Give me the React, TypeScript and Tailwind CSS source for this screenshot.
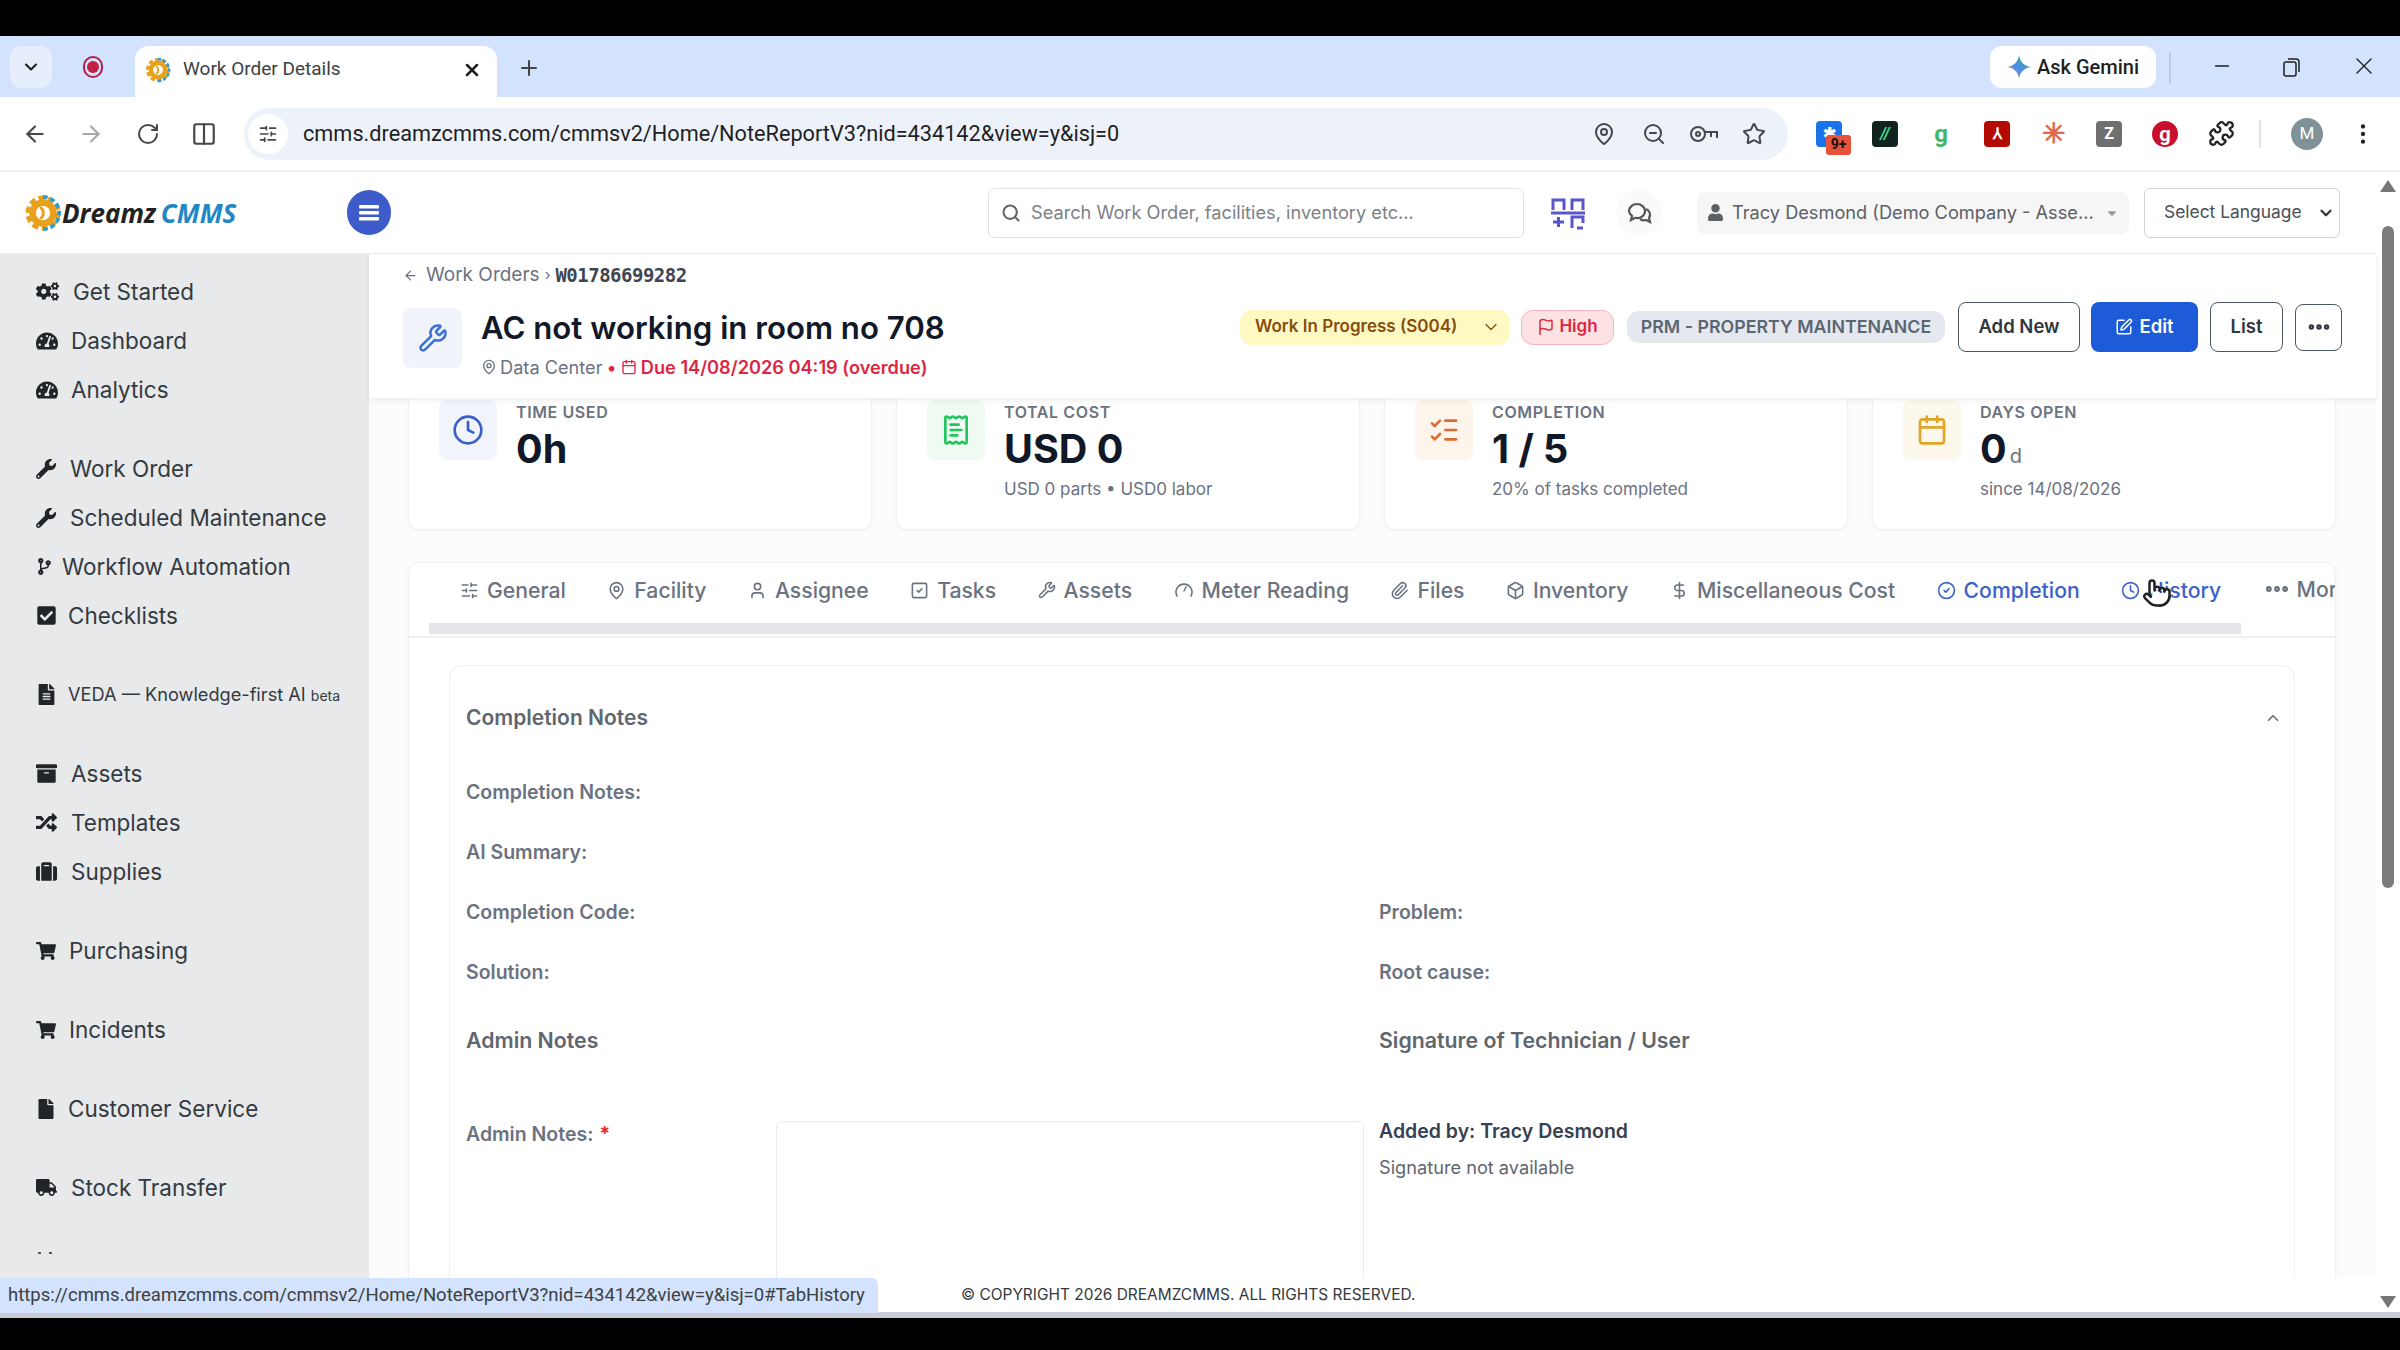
import React from "react";
import {
  ChevronDown, ChevronUp, X, Plus, ArrowLeft, ArrowRight, RotateCw, Columns2, MapPin, ZoomOut, Star,
  Puzzle, EllipsisVertical, Minus, Search, Wrench, Calendar, Clock, ReceiptText, ListChecks, Flag,
  SquarePen, Ellipsis, SlidersHorizontal, User, SquareCheck, Paperclip, Box, DollarSign, CircleCheck, SlidersVertical, Pointer,
} from "lucide-react";
import {
  FaCogs, FaTachometerAlt, FaWrench, FaCheckSquare, FaFileAlt, FaArchive, FaRandom, FaSuitcase, FaShoppingCart, FaFile, FaTruck, FaUser, FaCaretDown, FaCodeBranch,
} from "react-icons/fa";

const Gear = ({ size }: { size: number }) => (
  <svg width={size} height={size} viewBox="0 0 40 40" className="shrink-0">
    <circle cx="20" cy="20" r="15" fill="none" stroke="#e8a11c" strokeWidth="7" strokeDasharray="6 3.4" />
    <circle cx="20" cy="20" r="11" fill="none" stroke="#e8a11c" strokeWidth="7" />
    <path d="M20 3 A17 17 0 0 1 20 37" fill="none" stroke="#2f9bd1" strokeWidth="4" strokeDasharray="5 3" />
    <circle cx="20" cy="20" r="7" fill="#fff" />
    <path d="M17 14 A7 7 0 0 1 17 26" fill="none" stroke="#e8a11c" strokeWidth="3" />
  </svg>
);

const sideGroups: { label: React.ReactNode; icon: React.ReactNode; w: string; text: string }[][] = [
  [
    { label: "Get Started", icon: <FaCogs size={23} />, w: "w-[37px]", text: "text-[22.5px]" },
    { label: "Dashboard", icon: <FaTachometerAlt size={22} />, w: "w-[35px]", text: "text-[22.5px]" },
    { label: "Analytics", icon: <FaTachometerAlt size={22} />, w: "w-[35px]", text: "text-[22.5px]" },
  ],
  [
    { label: "Work Order", icon: <FaWrench size={20} />, w: "w-[34px]", text: "text-[22.5px]" },
    { label: "Scheduled Maintenance", icon: <FaWrench size={20} />, w: "w-[34px]", text: "text-[22.5px]" },
    { label: "Workflow Automation", icon: <FaCodeBranch size={17} />, w: "w-[26px]", text: "text-[22.5px]" },
    { label: "Checklists", icon: <FaCheckSquare size={21} />, w: "w-[32px]", text: "text-[22.5px]" },
  ],
  [
    {
      label: (
        <>
          VEDA — Knowledge-first AI <span className="text-[14px]">beta</span>
        </>
      ),
      icon: <FaFileAlt size={21} />,
      w: "w-[32px]",
      text: "text-[18.2px]",
    },
  ],
  [
    { label: "Assets", icon: <FaArchive size={21} />, w: "w-[35px]", text: "text-[22.5px]" },
    { label: "Templates", icon: <FaRandom size={21} />, w: "w-[35px]", text: "text-[22.5px]" },
    { label: "Supplies", icon: <FaSuitcase size={21} />, w: "w-[35px]", text: "text-[22.5px]" },
  ],
  [{ label: "Purchasing", icon: <FaShoppingCart size={20} />, w: "w-[33px]", text: "text-[22.5px]" }],
  [{ label: "Incidents", icon: <FaShoppingCart size={20} />, w: "w-[33px]", text: "text-[22.5px]" }],
  [{ label: "Customer Service", icon: <FaFile size={20} />, w: "w-[32px]", text: "text-[22.5px]" }],
  [{ label: "Stock Transfer", icon: <FaTruck size={21} />, w: "w-[35px]", text: "text-[22.5px]" }],
];

const Meter = () => (
  <svg width="20" height="20" viewBox="0 0 20 20" fill="none" stroke="currentColor" strokeWidth="1.6" strokeLinecap="round">
    <path d="M3 16 A8 8 0 1 1 17 16" />
    <path d="M10 11 L12 7" />
  </svg>
);

const tabs: { label: string; icon: React.ReactNode; active?: boolean }[] = [
  { label: "General", icon: <SlidersHorizontal size={19} /> },
  { label: "Facility", icon: <MapPin size={19} /> },
  { label: "Assignee", icon: <User size={19} /> },
  { label: "Tasks", icon: <SquareCheck size={19} /> },
  { label: "Assets", icon: <Wrench size={18} /> },
  { label: "Meter Reading", icon: <Meter /> },
  { label: "Files", icon: <Paperclip size={19} /> },
  { label: "Inventory", icon: <Box size={19} /> },
  { label: "Miscellaneous Cost", icon: <DollarSign size={19} /> },
  { label: "Completion", icon: <CircleCheck size={19} />, active: true },
  { label: "History", icon: <Clock size={19} />, active: true },
];

const Stat = ({ tint, icon, label, value, sub }: { tint: string; icon: React.ReactNode; label: string; value: React.ReactNode; sub?: string }) => (
  <div className="h-[132px] bg-white border-x border-b border-[#f0f1f4] rounded-b-xl pl-[30px] flex gap-[19px] shadow-[0_1px_3px_rgba(0,0,0,0.03)]">
    <div className={`w-[58px] h-[60px] mt-[2px] rounded-lg flex items-center justify-center ${tint}`}>{icon}</div>
    <div className="pt-[4px]">
      <div className="text-[16px] leading-[20px] font-semibold tracking-[0.6px] text-[#6b7280]">{label}</div>
      <div className="text-[39.5px] leading-[48px] mt-[3px] font-bold text-[#111827]">{value}</div>
      {sub && <div className="text-[17px] leading-[24px] mt-[4px] text-[#6b7280]">{sub}</div>}
    </div>
  </div>
);

const Label = ({ children }: { children: React.ReactNode }) => (
  <div className="h-[60px] flex items-center text-[19.5px] font-semibold text-[#6b7280]">{children}</div>
);

const Ext = ({ c, children }: { c: string; children?: React.ReactNode }) => (
  <div className={`w-[26px] h-[26px] rounded-[4px] flex items-center justify-center text-[16px] font-bold ${c}`}>{children}</div>
);

export default function App() {
  return (
    <div className="relative w-[2400px] h-[1350px] overflow-hidden flex flex-col bg-black font-['Inter',sans-serif]">
      <div className="h-[36px] shrink-0 bg-black" />

      {/* tab strip */}
      <div className="h-[61px] shrink-0 bg-[#d3e3fd] flex items-end pl-[10px] font-['Roboto',sans-serif] text-[#1f1f1f]">
        <div className="w-[42px] h-[42px] mb-[9px] rounded-xl bg-[#e6eefb] flex items-center justify-center">
          <ChevronDown size={20} strokeWidth={2.5} />
        </div>
        <div className="w-[42px] mb-[9px] h-[42px] ml-[20px] flex items-center justify-center">
          <div className="w-[20px] h-[22px] rounded-full border-2 border-[#b3204a] flex items-center justify-center">
            <div className="w-[12px] h-[12px] rounded-full bg-[#c2213f]" />
          </div>
        </div>
        <div className="w-[362px] h-[51px] ml-[21px] bg-white rounded-t-[14px] flex items-center pl-[10px] pb-[4px]">
          <Gear size={26} />
          <span className="ml-[12px] text-[19px] text-[#3c4043]">Work Order Details</span>
          <X size={20} strokeWidth={3} className="ml-auto mr-[15px]" />
        </div>
        <Plus size={24} className="ml-[20px] mb-[17px] text-[#444]" />
        <div className="ml-auto mb-[9px] w-[166px] h-[42px] rounded-xl bg-white flex items-center justify-center gap-[6px] text-[20px] font-medium">
          <svg width="24" height="24" viewBox="0 0 24 24">
            <defs>
              <linearGradient id="gem" x1="0" y1="1" x2="1" y2="0">
                <stop offset="0" stopColor="#f0a33a" />
                <stop offset="0.45" stopColor="#4b8df5" />
                <stop offset="1" stopColor="#3aa657" />
              </linearGradient>
            </defs>
            <path d="M12 0 C13 7 17 11 24 12 C17 13 13 17 12 24 C11 17 7 13 0 12 C7 11 11 7 12 0Z" fill="url(#gem)" />
          </svg>
          Ask Gemini
        </div>
        <div className="w-[2px] h-[30px] mb-[14px] ml-[13px] bg-[#b9c9e6]" />
        <Minus size={22} strokeWidth={1.5} className="ml-[40px] mb-[20px]" />
        <div className="ml-[47px] mb-[19px] w-[22px] h-[22px]">
          <svg width="22" height="22" viewBox="0 0 22 22" fill="none" stroke="currentColor" strokeWidth="1.5">
            <rect x="4" y="6" width="12" height="14" rx="2" />
            <path d="M8 3h8a3 3 0 0 1 3 3v10" />
          </svg>
        </div>
        <X size={28} strokeWidth={1.2} className="ml-[48px] mb-[17px]" />
        <div className="w-[22px]" />
      </div>

      {/* toolbar */}
      <div className="h-[75px] shrink-0 bg-white border-b-2 border-[#eceef1] flex items-center pl-[22px] font-['Roboto',sans-serif] text-[#474747]">
        <ArrowLeft size={26} />
        <ArrowRight size={26} className="ml-[30px] text-[#a8a8a8]" />
        <RotateCw size={24} className="ml-[32px]" />
        <Columns2 size={26} className="ml-[31px]" />
        <div className="ml-[27px] w-[1544px] h-[52px] rounded-full bg-[#edf2fa] flex items-center pl-[4px] pr-[22px]">
          <div className="w-[40px] h-[40px] rounded-full bg-white flex items-center justify-center">
            <SlidersVertical size={20} className="rotate-90" />
          </div>
          <span className="ml-[15px] pt-[2px] text-[21.7px] text-[#1f1f1f]">cmms.dreamzcmms.com/cmmsv2/Home/NoteReportV3?nid=434142&amp;view=y&amp;isj=0</span>
          <MapPin size={24} className="ml-auto" />
          <ZoomOut size={24} className="ml-[26px]" />
          <svg width="30" height="20" viewBox="0 0 30 20" fill="none" stroke="currentColor" strokeWidth="2" className="ml-[23px]">
            <circle cx="9" cy="10" r="7" />
            <circle cx="9" cy="10" r="2" />
            <path d="M16 8h12v6M22 8v5" />
          </svg>
          <Star size={24} className="ml-[23px]" />
        </div>
        <div className="ml-[28px] relative">
          <Ext c="bg-[#1a73e8] text-white">✱</Ext>
          <div className="absolute left-[10px] top-[14px] w-[25px] h-[20px] rounded-[3px] bg-[#e5533d] text-[#111] text-[14px] font-bold flex items-center justify-center">9+</div>
        </div>
        <div className="ml-[30px]"><Ext c="bg-[#10231e] text-[#3ddc97] italic">//</Ext></div>
        <div className="ml-[30px]"><Ext c="bg-white text-[#3cb96a] text-[24px]">g</Ext></div>
        <div className="ml-[30px]"><Ext c="bg-[#b30b00] text-white">⅄</Ext></div>
        <div className="ml-[30px]"><Ext c="bg-white text-[#e0694d] text-[28px]">✳</Ext></div>
        <div className="ml-[30px]"><Ext c="bg-[#6f6f6f] text-white">Z</Ext></div>
        <div className="ml-[30px]"><Ext c="rounded-full bg-[#c8102e] text-white text-[20px]">g</Ext></div>
        <Puzzle size={27} className="ml-[30px] text-[#222]" />
        <div className="ml-[24px] w-[2px] h-[28px] bg-[#dfe3e8]" />
        <div className="ml-[30px] w-[32px] h-[32px] rounded-full bg-[#7f9297] text-white text-[17px] flex items-center justify-center">M</div>
        <EllipsisVertical size={26} className="ml-[27px] text-[#222]" />
      </div>

      {/* body */}
      <div className="h-[1140px] shrink-0 flex bg-white">
        <div className="w-[2376px] flex flex-col min-w-0">
          {/* app header */}
          <div className="h-[82px] shrink-0 bg-white border-b border-[#eceef1] flex items-center">
            <div className="flex items-center ml-[24px] w-[322px]">
              <Gear size={38} />
              <span className="text-[26px] leading-none font-bold italic text-[#222] font-['Open_Sans',sans-serif]">Dreamz</span>
              <span className="ml-[5px] text-[26px] leading-none font-bold italic text-[#1e88c7] font-['Open_Sans',sans-serif]">CMMS</span>
            </div>
            <div className="w-[44px] h-[45px] rounded-full bg-[#3d5bc9] text-white flex items-center justify-center translate-x-[1px]">
              <svg width="20" height="18" viewBox="0 0 20 18" fill="currentColor">
                <rect y="1" width="20" height="3.4" rx="1" />
                <rect y="7" width="20" height="3.4" rx="1" />
                <rect y="13" width="20" height="3.4" rx="1" />
              </svg>
            </div>
            <div className="ml-[598px] w-[536px] h-[50px] rounded-md border border-[#dee2e6] flex items-center pl-[12px] text-[#7b8188] text-[18.2px]">
              <Search size={20} strokeWidth={2.5} className="text-[#666]" />
              <span className="ml-[10px]">Search Work Order, facilities, inventory etc...</span>
            </div>
            <div className="ml-[26px] w-[36px] h-[36px] text-[#5a55c9]">
              <svg width="36" height="36" viewBox="0 0 36 36" fill="none" stroke="currentColor" strokeWidth="3">
                <path d="M3 15V5h11v10M22 15V5h11v10M1 18h34" />
                <path d="M3 27h11M8.500 22v10M22 33V22h11v6M27 33h6" />
              </svg>
            </div>
            <div className="ml-[30px] w-[46px] h-[46px] rounded-full bg-[#fafafa] flex items-center justify-center text-[#555]">
              <svg width="26" height="26" viewBox="0 0 26 26" fill="none" stroke="currentColor" strokeWidth="2.2">
                <path d="M3 11a8 7 0 0 1 16 0a8 7 0 0 1-10 6.800L5 20l1-4a7 7 0 0 1-3-5Z" />
                <path d="M20 9a6 6 0 0 1 3 9l1 4-4-2a7 7 0 0 1-6-1" />
              </svg>
            </div>
            <div className="ml-[35px] w-[432px] h-[42px] rounded-lg bg-[#f6f6f7] flex items-center pl-[10px] text-[#5b6066] text-[18.2px]">
              <FaUser size={17} />
              <span className="ml-[8px] whitespace-nowrap">Tracy Desmond (Demo Company - Asse...</span>
              <FaCaretDown size={14} className="ml-auto mr-[10px] text-[#999]" />
            </div>
            <div className="ml-[15px] w-[196px] h-[50px] rounded-md border border-[#ced4da] flex items-center pl-[19px] text-[17.4px] text-[#495057] whitespace-nowrap">
              Select Language
              <ChevronDown size={18} strokeWidth={3} className="ml-auto mr-[4px] text-[#333]" />
            </div>
          </div>

          <div className="flex-1 min-h-0 flex">
            {/* sidebar */}
            <div className="w-[369px] shrink-0 bg-[#e8e9eb] overflow-hidden pt-[13px] text-[#343a40]">
              {sideGroups.map((group, i) => (
                <div key={i} className={i === 0 ? "" : "mt-[30px]"}>
                  {group.map((item, j) => (
                    <div key={j} className="h-[49px] flex items-center pl-[36px] whitespace-nowrap">
                      <span className={`shrink-0 text-[#212529] ${item.w}`}>{item.icon}</span>
                      <span className={item.text}>{item.label}</span>
                    </div>
                  ))}
                </div>
              ))}
              <div className="mt-[40px] ml-[38px] flex gap-[8px]">
                <div className="w-[3px] h-[2px] bg-[#555]" />
                <div className="w-[3px] h-[2px] bg-[#555]" />
              </div>
            </div>

            {/* main */}
            <div className="flex-1 min-w-0 flex flex-col bg-[#fcfcfd]">
              <div className="h-[144px] shrink-0 bg-white shadow-[0_2px_6px_rgba(0,0,0,0.08)] pl-[34px] pr-[34px] pt-[10px] relative z-10">
                <div className="h-[22px] flex items-center text-[19px] text-[#6b7280] whitespace-nowrap">
                  <ArrowLeft size={15} />
                  <span className="ml-[8px]">Work Orders</span>
                  <span className="mx-[5px] text-[15px]">›</span>
                  <span className="font-['DejaVu_Sans_Mono',monospace] font-bold text-[#3f4650] text-[19px] tracking-[-0.500px]">W01786699282</span>
                </div>
                <div className="mt-[22px] flex items-start justify-between">
                  <div className="flex">
                    <div className="w-[59px] h-[60px] rounded-lg bg-[#f0f4fa] flex items-center justify-center text-[#3b6fd8]">
                      <Wrench size={30} />
                    </div>
                    <div className="ml-[19px]">
                      <div className="text-[31.2px] leading-[38px] font-semibold text-[#111827] mt-[1px]">AC not working in room no 708</div>
                      <div className="mt-[8px] flex items-center text-[18.2px] leading-[24px] whitespace-nowrap">
                        <MapPin size={16} className="text-[#6b7280]" />
                        <span className="ml-[3px] text-[#6b7280]">Data Center</span>
                        <span className="mx-[4px] text-[#dc2743]">•</span>
                        <Calendar size={16} className="text-[#dc2743]" />
                        <span className="ml-[4px] font-semibold text-[#dc2743]">Due 14/08/2026 04:19 (overdue)</span>
                      </div>
                    </div>
                  </div>
                  <div className="flex items-center h-[50px] -mt-[6px] whitespace-nowrap">
                    <div className="w-[270px] h-[35px] rounded-xl bg-[#fef9c3] text-[#854d0e] text-[17px] font-semibold flex items-center pl-[15px]">
                      Work In Progress (S004)
                      <ChevronDown size={20} strokeWidth={1.5} className="ml-auto mr-[9px]" />
                    </div>
                    <div className="ml-[11px] w-[93px] h-[35px] rounded-xl bg-[#fde2e4] border border-[#f7b6bd] text-[#dc2743] text-[17px] font-semibold flex items-center justify-center gap-[4px]">
                      <Flag size={18} />
                      High
                    </div>
                    <div className="ml-[13px] w-[318px] h-[32px] rounded-xl bg-[#e5e9ef] text-[#5b6673] text-[17.8px] font-semibold flex items-center justify-center">
                      PRM - PROPERTY MAINTENANCE
                    </div>
                    <div className="ml-[13px] w-[122px] h-[50px] rounded-lg border border-[#4b5563] bg-white text-[#2f3640] text-[18.500px] font-semibold flex items-center justify-center">Add New</div>
                    <div className="ml-[11px] w-[107px] h-[50px] rounded-lg bg-[#1d5bd8] text-white text-[18.500px] font-semibold flex items-center justify-center gap-[6px]">
                      <SquarePen size={18} />
                      Edit
                    </div>
                    <div className="ml-[12px] w-[73px] h-[50px] rounded-lg border border-[#4b5563] bg-white text-[#2f3640] text-[18.500px] font-semibold flex items-center justify-center">List</div>
                    <div className="ml-[12px] w-[47px] h-[47px] rounded-lg border border-[#4b5563] bg-white text-[#2f3640] flex items-center justify-center">
                      <Ellipsis size={26} strokeWidth={3} />
                    </div>
                  </div>
                </div>
              </div>

              <div className="flex-1 min-h-0 overflow-hidden pl-[39px] pr-[40px]">
                <div className="grid grid-cols-4 gap-[24px]">
                  <Stat tint="bg-[#f1f4fb]" icon={<Clock size={32} className="text-[#3b5fc9]" />} label="TIME USED" value="0h" />
                  <Stat tint="bg-[#eefaf2]" icon={<ReceiptText size={32} className="text-[#22c55e]" />} label="TOTAL COST" value="USD 0" sub="USD 0 parts • USD0 labor" />
                  <Stat tint="bg-[#fdf4ec]" icon={<ListChecks size={32} className="text-[#dd6b33]" />} label="COMPLETION" value="1 / 5" sub="20% of tasks completed" />
                  <Stat
                    tint="bg-[#fdf8ec]"
                    icon={<Calendar size={32} className="text-[#e0a526]" />}
                    label="DAYS OPEN"
                    value={
                      <>
                        0<span className="ml-[3px] text-[20px] leading-none font-normal text-[#6b7280]">d</span>
                      </>
                    }
                    sub="since 14/08/2026"
                  />
                </div>

                <div className="mt-[32px] bg-white border border-[#eff0f3] rounded-t-xl overflow-hidden shadow-[0_1px_4px_rgba(0,0,0,0.04)] h-[800px]">
                  <div className="h-[60px] flex items-center pl-[51px] pb-[5px] overflow-hidden whitespace-nowrap text-[21.2px] font-medium text-[#6b7280]">
                    {tabs.map((t) => (
                      <div key={t.label} className={`flex items-center gap-[8px] mr-[41.4px] shrink-0 ${t.active ? "text-[#3b62c8]" : ""}`}>
                        {t.icon}
                        <span>{t.label}</span>
                      </div>
                    ))}
                    <div className="flex items-center gap-[6px] shrink-0 -mt-[2px]">
                      <Ellipsis size={28} strokeWidth={3} />
                      <span>More</span>
                    </div>
                  </div>
                  <div className="h-[15px] border-b-2 border-[#eff0f3] pl-[20px]">
                    <div className="w-[1812px] h-[11px] bg-[#e4e6ea]" />
                  </div>
                  <div className="mx-[40px] mt-[27px] border border-[#eceef1] rounded-xl h-[700px] px-[16px]">
                    <div className="h-[97px] flex items-center justify-between text-[21px] font-semibold text-[#5f6670] pt-[7px]">
                      Completion Notes
                      <ChevronUp size={18} className="-mr-[4px]" />
                    </div>
                    <div className="grid grid-cols-[913px_1fr]">
                      <Label>Completion Notes:</Label>
                      <div />
                      <Label>AI Summary:</Label>
                      <div />
                      <Label>Completion Code:</Label>
                      <Label>Problem:</Label>
                      <Label>Solution:</Label>
                      <Label>Root cause:</Label>
                      <div className="h-[76px] flex items-center text-[21.3px] font-semibold text-[#5f6670]">Admin Notes</div>
                      <div className="h-[76px] flex items-center text-[21.3px] font-semibold text-[#5f6670]">Signature of Technician / User</div>
                      <div className="pt-[42px] flex">
                        <div className="w-[310px] h-[28px] flex items-center text-[19.5px] font-semibold text-[#6b7280]">
                          Admin Notes:<span className="ml-[6px] text-[#dc2626]">*</span>
                        </div>
                        <div className="w-[588px] h-[300px] rounded-md border border-[#e9ecef]" />
                      </div>
                      <div className="pt-[38px]">
                        <div className="text-[19.5px] leading-[28px] font-semibold text-[#374151]">Added by: Tracy Desmond</div>
                        <div className="mt-[8px] text-[18.2px] leading-[28px] text-[#5f6670]">Signature not available</div>
                      </div>
                    </div>
                  </div>
                </div>
              </div>

              <div className="h-[34px] shrink-0 bg-white flex items-center pl-[592px] text-[15.45px] text-[#343a40]">
                © COPYRIGHT 2026 DREAMZCMMS. ALL RIGHTS RESERVED.
              </div>
            </div>
          </div>
        </div>

        {/* page scrollbar */}
        <div className="w-[24px] shrink-0 bg-white flex flex-col items-center pt-[8px] pb-[4px] text-[#6f6f6f]">
          <div className="w-0 h-0 border-x-[8px] border-x-transparent border-b-[12px] border-b-[#777]" />
          <div className="mt-[34px] w-[12px] h-[662px] rounded-full bg-[#7c7c7c]" />
          <div className="mt-auto w-0 h-0 border-x-[8px] border-x-transparent border-t-[12px] border-t-[#777]" />
        </div>
      </div>

      <div className="h-[6px] shrink-0 bg-[#c8ccd4]" />
      <div className="flex-1 bg-black" />

      {/* link status bubble */}
      <div className="absolute left-0 top-[1278px] w-[878px] h-[35px] bg-[#d3e3fd] rounded-tr-md flex items-center pl-[8px] text-[18.500px] text-[#3c4043] font-['Roboto',sans-serif] whitespace-nowrap">
        https://cmms.dreamzcmms.com/cmmsv2/Home/NoteReportV3?nid=434142&amp;view=y&amp;isj=0#TabHistory
      </div>
      {/* mouse cursor */}
      <div className="absolute left-[2142px] top-[578px]">
        <Pointer size={30} className="fill-white text-[#222]" />
      </div>
    </div>
  );
}
